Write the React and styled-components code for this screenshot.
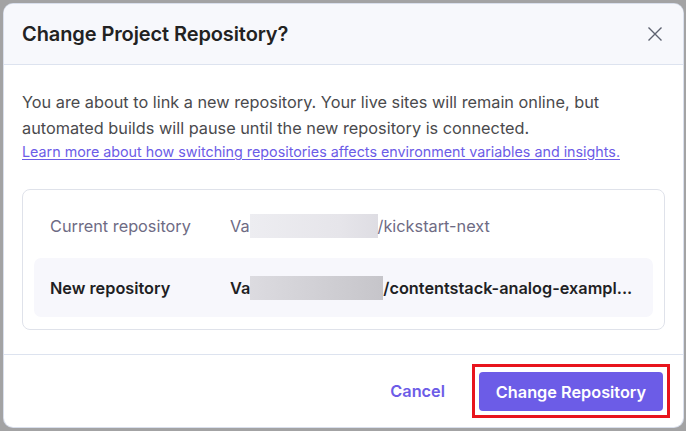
import React from "react";
import styled, { createGlobalStyle } from "styled-components";

const Global = createGlobalStyle`
  html, body { margin: 0; padding: 0; }
  body {
    width: 686px;
    height: 431px;
    overflow: hidden;
    background: #a3a3a4;
    font-family: Inter, "Noto Sans", sans-serif;
  }
`;

const Backdrop = styled.div`
  width: 686px;
  height: 431px;
  box-sizing: border-box;
  padding: 4px 3px 4px 4px;
`;

const Modal = styled.div`
  height: 100%;
  background: #fff;
  border-radius: 9px;
  overflow: hidden;
  display: flex;
  flex-direction: column;
  box-shadow: 0 0 0 1px #d9dfec;
`;

const Header = styled.header`
  height: 60px;
  flex: none;
  display: flex;
  align-items: center;
  justify-content: space-between;
  padding: 0 18px 0 18px;
  background: #f7f8fc;
  border-bottom: 1px solid #dde3ef;
`;

const Title = styled.h2`
  margin: 0;
  font-size: 20px;
  font-weight: 600;
  color: #222222;
  letter-spacing: -0.1px;
`;

const CloseButton = styled.button`
  border: 0;
  background: none;
  padding: 0;
  width: 20px;
  height: 20px;
  display: flex;
  align-items: center;
  justify-content: center;
  color: #5d6270;
  cursor: pointer;
`;

const Body = styled.div`
  flex: 1;
  padding: 24px 18px 24px 18px;
  display: flex;
  flex-direction: column;
`;

const Lead = styled.p`
  margin: 0;
  font-size: 16.3px;
  line-height: 26px;
  color: #4a4a4d;
`;

const LearnLink = styled.a`
  display: block;
  margin-top: 1px;
  font-size: 14.3px;
  line-height: 20px;
  color: #6c5ce7;
  text-decoration: underline;
  text-underline-offset: 2px;
`;

const Card = styled.div`
  margin-top: 27px;
  border: 1px solid #dfe2ea;
  border-radius: 8px;
  padding: 12px 11px 12px 11px;
  display: flex;
  flex-direction: column;
  gap: 8px;
`;

const Row = styled.div`
  display: grid;
  grid-template-columns: 180px 1fr;
  align-items: center;
  height: ${(p) => (p.$highlight ? "59px" : "48px")};
  padding: 0 16px;
  border-radius: 7px;
  background: ${(p) => (p.$highlight ? "#f7f7fc" : "transparent")};
  font-size: 16.3px;
  font-weight: ${(p) => (p.$highlight ? 600 : 400)};
  color: ${(p) => (p.$highlight ? "#1f1f24" : "#6e6b84")};
`;

const Value = styled.div`
  display: flex;
  align-items: center;
  white-space: nowrap;
  overflow: hidden;
  min-width: 0;
`;

const Masked = styled.span`
  display: inline-block;
  flex: none;
  width: ${(p) => p.$w}px;
  height: 24px;
  background: ${(p) =>
    p.$dark
      ? "linear-gradient(90deg, #dcdbe0 0%, #cfced3 60%, #c6c5ca 100%)"
      : "linear-gradient(90deg, #ededf1 0%, #e6e5ea 70%, #dedde3 100%)"};
`;

const Footer = styled.footer`
  flex: none;
  height: 72px;
  border-top: 1px solid #dde3ef;
  display: flex;
  align-items: center;
  justify-content: flex-end;
  padding: 0 20px 0 0;
  gap: 27px;
`;

const TextButton = styled.button`
  border: 0;
  background: none;
  font-family: inherit;
  font-size: 16.3px;
  font-weight: 600;
  color: #6c5ce7;
  padding: 0;
  cursor: pointer;
`;

const Focus = styled.div`
  border: 3px solid #e8141d;
  padding: 5px 4px 4px 4px;
  margin-right: -7px;
`;

const PrimaryButton = styled.button`
  display: block;
  border: 0;
  border-radius: 4px;
  background: #6c5ce7;
  color: #fff;
  font-family: inherit;
  font-size: 16.3px;
  font-weight: 600;
  height: 39px;
  width: 184px;
  cursor: pointer;
`;

export default function App() {
  return (
    <>
      <Global />
      <Backdrop>
        <Modal>
          <Header>
            <Title>Change Project Repository?</Title>
            <CloseButton aria-label="Close">
              <svg width="16" height="16" viewBox="0 0 16 16" fill="none">
                <path d="M1.5 1.5 L14.5 14.5 M14.5 1.5 L1.5 14.5" stroke="currentColor" strokeWidth="1.4" />
              </svg>
            </CloseButton>
          </Header>
          <Body>
            <Lead>
              You are about to link a new repository. Your live sites will remain online, but
              automated builds will pause until the new repository is connected.
            </Lead>
            <LearnLink href="#">
              Learn more about how switching repositories affects environment variables and insights.
            </LearnLink>
            <Card>
              <Row>
                <span>Current repository</span>
                <Value>
                  Va<Masked $w={128} />/kickstart-next
                </Value>
              </Row>
              <Row $highlight>
                <span>New repository</span>
                <Value>
                  Va<Masked $w={133} $dark />/contentstack-analog-exampl...
                </Value>
              </Row>
            </Card>
          </Body>
          <Footer>
            <TextButton>Cancel</TextButton>
            <Focus>
              <PrimaryButton>Change Repository</PrimaryButton>
            </Focus>
          </Footer>
        </Modal>
      </Backdrop>
    </>
  );
}
